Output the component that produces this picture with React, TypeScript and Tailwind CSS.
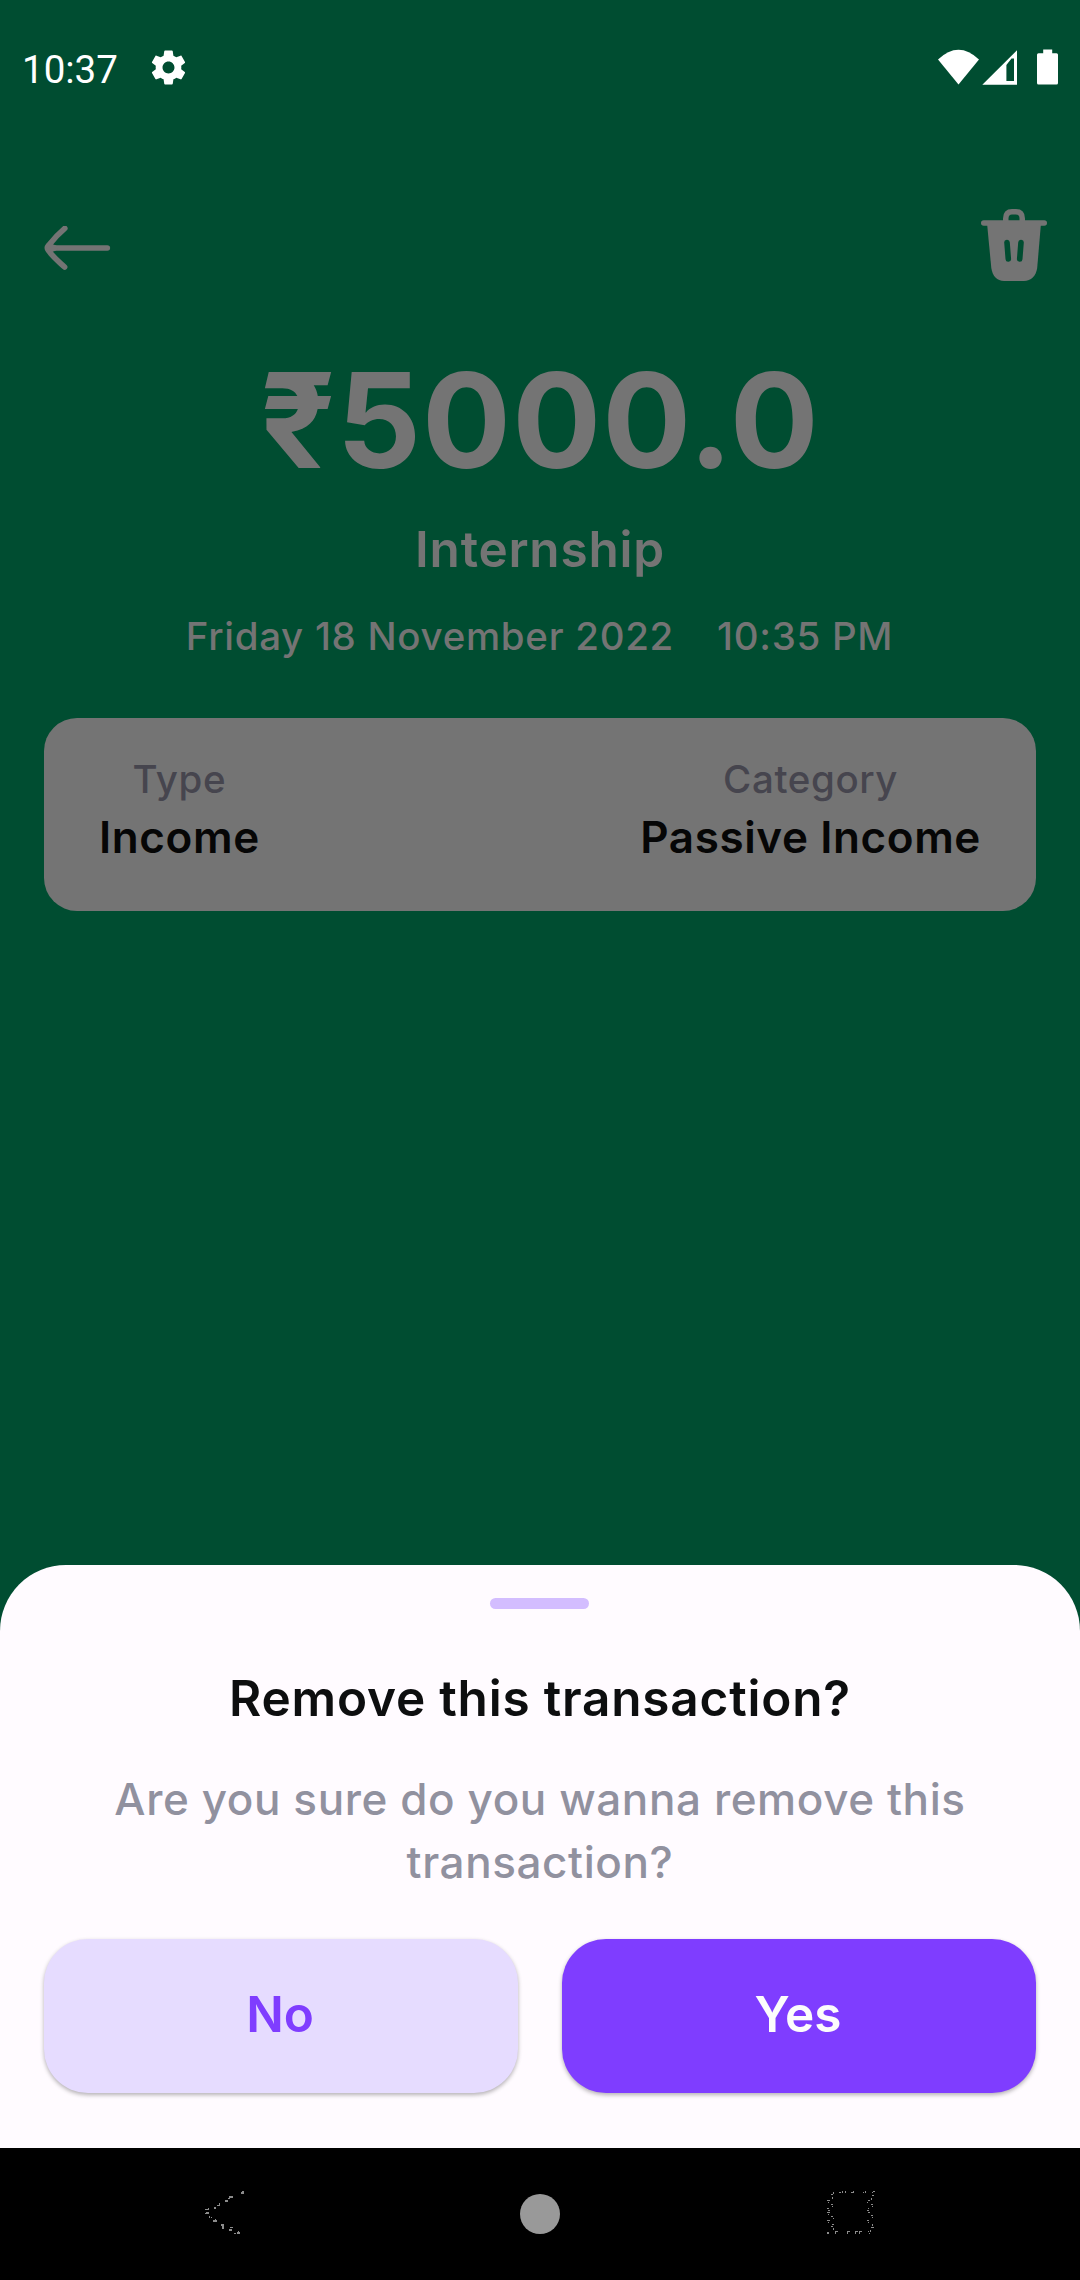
const GEAR =
  "M19.43 12.98c.04-.32.07-.64.07-.98s-.03-.66-.07-.98l2.11-1.65c.19-.15.24-.42.12-.64l-2-3.46c-.12-.22-.39-.3-.61-.22l-2.49 1c-.52-.4-1.08-.73-1.69-.98l-.38-2.65C14.46 2.18 14.25 2 14 2h-4c-.25 0-.46.18-.49.42l-.38 2.65c-.61.25-1.17.59-1.69.98l-2.49-1c-.23-.09-.49 0-.61.22l-2 3.46c-.13.22-.07.49.12.64l2.11 1.65c-.04.32-.07.65-.07.98s.03.66.07.98l-2.11 1.65c-.19.15-.24.42-.12.64l2 3.46c.12.22.39.3.61.22l2.49-1c.52.4 1.08.73 1.69.98l.38 2.65c.03.24.24.42.49.42h4c.25 0 .46-.18.49-.42l.38-2.65c.61-.25 1.17-.59 1.69-.98l2.49 1c.23.09.49 0 .61-.22l2-3.46c.12-.22.07-.49-.12-.64l-2.11-1.65zM12 15.5c-1.93 0-3.5-1.57-3.5-3.5s1.57-3.5 3.5-3.5 3.5 1.57 3.5 3.5-1.57 3.5-3.5 3.5z";

function StatusBar() {
  return (
    <header className="flex h-[132px] items-start pl-[22px] font-[Roboto,sans-serif] text-white">
      <span className="mt-[46px] w-[97px] text-[38.5px] leading-[48px]">10:37</span>
      <svg className="mt-[47px] ml-[29px] size-[41px]" viewBox="0 0 24 24" fill="currentColor">
        <path d={GEAR} />
      </svg>
      <svg className="mt-[48px] mr-[20px] ml-auto h-[38px] w-[124px]" viewBox="0 0 124 38" fill="currentColor">
        <path d="M2 11.5Q22.5-8 43 11.5L22.5 36.5Z" />
        <path fillRule="evenodd" d="M46.3 36.7 81 2.2V36.7ZM70.4 17V33H78V10.5H75.5Z" />
        <path d="M107.2 1.4h9v3.9h4.3q1.5 0 1.5 1.5v28.3q0 1.5-1.5 1.5h-18q-1.5 0-1.5-1.5V6.8q0-1.5 1.5-1.5h4.7Z" />
      </svg>
    </header>
  );
}

function BackIcon() {
  return (
    <svg className="mt-[17px] h-[44px] w-[68px]" viewBox="0 0 68 44" fill="none" stroke="currentColor" strokeWidth="5.6" strokeLinecap="round" strokeLinejoin="round">
      <path d="M8 22H63.3" />
      <path d="M20.8 2.4C13 9 8 15 4.500 19.400Q2.300 22 4.500 24.600C8 30 13 34 20.600 41" />
      <path d="M5 20 10.500 22 5 24Z" />
    </svg>
  );
}

function TrashIcon() {
  return (
    <svg className="h-[72px] w-[66px]" viewBox="0 0 66 72" fill="none" stroke="currentColor" strokeLinecap="round">
      <path d="M24.750 14V9.500Q24.750 2.750 31 2.750H35Q41.250 2.750 41.250 9.500V14" strokeWidth="5.500" />
      <path d="M2.750 14H63.250" strokeWidth="5.500" />
      <path fill="currentColor" stroke="none" d="M6 14H60L56.200 59C55 67 50 72 43 72H23C16 72 11.500 67 10.300 59Z" />
      <path d="M26 33.500 27.300 50M40 33.500 38.700 50" stroke="#004D31" strokeWidth="5.600" />
    </svg>
  );
}

function Detail({ label, value }: { label: string; value: string }) {
  return (
    <div className="flex flex-col items-center gap-[5px]">
      <span className="text-[38.5px] leading-[50px] font-medium tracking-[0.6px] text-[#46454e]">{label}</span>
      <span className="text-[44px] leading-[56px] font-semibold tracking-[0.6px] text-[#060606]">{value}</span>
    </div>
  );
}

function Transaction() {
  return (
    <main className="flex flex-col px-11 text-[#747474]">
      <div className="mt-[77px] -mr-[11px] flex h-[72px] items-start justify-between">
        <BackIcon />
        <TrashIcon />
      </div>
      <h1 className="mt-[59px] text-center text-[132px] leading-[160px] font-bold tracking-[1.05px]">₹5000.0</h1>
      <p className="mt-4 text-center text-[49.5px] leading-[66px] font-semibold tracking-[0.78px]">Internship</p>
      <div className="mt-[29px] flex justify-center gap-[43px] pr-px text-[38.5px] leading-[50px] font-medium tracking-[0.7px]">
        <span>Friday 18 November 2022</span>
        <span>10:35 PM</span>
      </div>
      <section className="mt-[57px] flex h-[193px] justify-between rounded-[33px] bg-[#747474] px-[55px] pt-9">
        <Detail label="Type" value="Income" />
        <Detail label="Category" value="Passive Income" />
      </section>
    </main>
  );
}

function RemoveSheet() {
  return (
    <section className="mt-auto flex h-[583px] flex-col items-center rounded-t-[66px] bg-[#fffbff] px-11 pt-[33px]">
      <div className="mr-px h-[11px] w-[99px] shrink-0 rounded-full bg-[#d3bdff]" />
      <h2 className="mt-14 text-[49.5px] leading-[66px] font-semibold tracking-[0.8px] text-[#0d0e0f]">
        Remove this transaction?
      </h2>
      <p className="mt-[37px] text-center text-[44px] leading-[63px] font-medium tracking-[0.6px] text-[#91919f]">
        Are you sure do you wanna remove this
        <br />
        transaction?
      </p>
      <div className="mt-[45px] flex w-full gap-11 text-[49.5px] leading-[150px] font-semibold">
        <button className="flex h-[154px] flex-1 justify-center rounded-[44px] bg-[#e6dcff] pr-[2px] text-[#7f3dff] shadow-[0_2px_4px_rgba(0,0,0,0.3)]">No</button>
        <button className="flex h-[154px] flex-1 justify-center rounded-[44px] bg-[#7f3dff] pr-[2px] text-[#fcfcfc] shadow-[0_2px_4px_rgba(0,0,0,0.3)]">Yes</button>
      </div>
    </section>
  );
}

const BACK_DOTS =
  "M61 23h3v2h-3zM62 22h2v1h-2zM49 27h4v2h-4zM48 29h2v1h-2zM45 31h3v2h-3zM39 34h1v3h-1zM37 36h2v1h-2zM34 38h2v2h-2zM25 40h3v1h-3zM28 39h1v2h-1zM26 43h3v2h-3zM25 44h2v1h-2zM29 47h1v2h-1zM31 48h1v1h-1zM33 51h4v2h-4zM35 50h1v2h-1zM41 55h3v2h-3zM42 57h2v3h-2zM50 58h3v1h-3zM49 60h3v2h-3zM54 64h2v1h-2zM57 63h3v2h-3zM58 62h1v2h-1z";
const RECENT_DOTS =
  "M339 23h2v1h-2zM342 22h1v2h-1zM345 22h1v2h-1zM351 23h2v1h-2zM353 22h1v2h-1zM363 23h1v1h-1zM365 22h1v2h-1zM372 23h1v1h-1zM373 22h2v1h-2zM333 23h1v2h-1zM331 25h2v1h-2zM332 28h1v2h-1zM327 31h3v1h-3zM328 33h1v1h-1zM331 35h2v1h-2zM332 37h1v1h-1zM327 39h2v1h-2zM328 41h2v1h-2zM327 43h3v1h-3zM328 45h1v1h-1zM331 47h2v1h-2zM333 49h1v1h-1zM327 51h3v1h-3zM328 53h1v1h-1zM332 55h2v1h-2zM331 57h2v1h-2zM333 59h1v2h-1zM327 63h2v2h-2zM335 62h3v1h-3zM335 63h1v2h-1zM347 62h3v1h-3zM347 63h1v2h-1zM355 62h3v1h-3zM355 63h1v2h-1zM359 62h3v1h-3zM359 63h1v2h-1zM368 62h1v1h-1zM370 62h1v1h-1zM369 64h1v1h-1zM372 26h2v1h-2zM371 29h1v2h-1zM368 31h2v1h-2zM367 33h1v1h-1zM371 35h2v1h-2zM372 37h1v1h-1zM368 39h1v1h-1zM367 41h2v1h-2zM368 43h2v1h-2zM371 46h2v1h-2zM372 48h1v1h-1zM367 51h2v1h-2zM368 53h1v1h-1zM372 55h1v2h-1zM371 58h3v1h-3zM370 61h1v1h-1z";

function NavigationBar() {
  return (
    <nav className="flex h-[132px] items-center justify-center bg-black">
      <svg className="h-[90px] w-[100px]" viewBox="0 0 100 90" fill="#8c8c8c">
        <path d={BACK_DOTS} />
      </svg>
      <span className="mx-[240px] size-10 rounded-full bg-[#999]" />
      <svg className="h-[90px] w-[100px]" viewBox="300 0 100 90" fill="#8c8c8c">
        <path d={RECENT_DOTS} />
      </svg>
    </nav>
  );
}

export default function App() {
  return (
    <div className="flex h-[2280px] w-[1080px] flex-col overflow-hidden bg-[#004d31] font-[Inter,sans-serif]">
      <StatusBar />
      <Transaction />
      <RemoveSheet />
      <NavigationBar />
    </div>
  );
}
